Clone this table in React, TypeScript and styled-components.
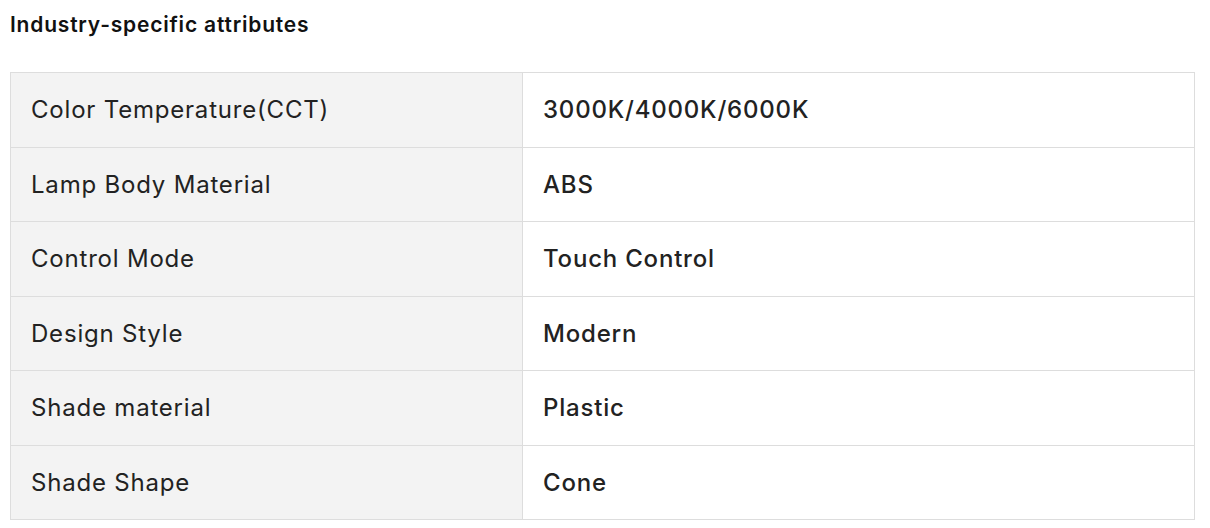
import React from "react";
import styled, { createGlobalStyle } from "styled-components";

const GlobalStyle = createGlobalStyle`
    body {
        margin: 0;
        background: #ffffff;
        font-family: Inter, "Noto Sans", sans-serif;
        color: #222222;
    }
`;

const Page = styled.div`
    padding: 11px 15px 0 10px;
`;

const Title = styled.h3`
    margin: 0;
    font-size: 21px;
    font-weight: 600;
    line-height: 28px;
    letter-spacing: 0.8px;
    color: #111111;
`;

const Table = styled.table`
    margin-top: 33px;
    width: 100%;
    table-layout: fixed;
    border-collapse: collapse;
    border: 1px solid #dddddd;
`;

const Row = styled.tr`
    height: 74.5px;
    border-bottom: 1px solid #dddddd;
`;

const NameCell = styled.td`
    width: 471px;
    padding: 0 20px;
    background: #f3f3f3;
    border-right: 1px solid #dddddd;
    font-size: 24px;
    font-weight: 400;
    letter-spacing: 0.8px;
    color: #222222;
`;

const ValueCell = styled.td`
    padding: 0 20px;
    font-size: 24px;
    font-weight: 500;
    letter-spacing: 0.8px;
    color: #222222;
`;

const attributes: [string, string][] = [
    ["Color Temperature(CCT)", "3000K/4000K/6000K"],
    ["Lamp Body Material", "ABS"],
    ["Control Mode", "Touch Control"],
    ["Design Style", "Modern"],
    ["Shade material", "Plastic"],
    ["Shade Shape", "Cone"],
];

function App() {
    return (
        <>
            <GlobalStyle />
            <Page>
                <Title>Industry-specific attributes</Title>
                <Table>
                    <tbody>
                        {attributes.map(([name, value]) => (
                            <Row key={name}>
                                <NameCell>{name}</NameCell>
                                <ValueCell>{value}</ValueCell>
                            </Row>
                        ))}
                    </tbody>
                </Table>
            </Page>
        </>
    );
}

export default App;
